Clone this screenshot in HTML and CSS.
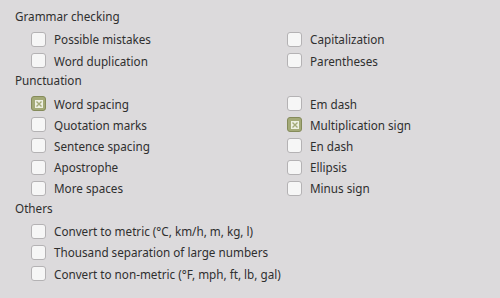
FILE: index.html
```html
<!DOCTYPE html>
<html>
<head>
<meta charset="utf-8">
<link rel="stylesheet" href="styles.css">
</head>
<body>
<div class="panel">
  <div class="heading">Grammar checking</div>
  <div class="grid">
    <label class="opt"><span class="box"></span>Possible mistakes</label>
    <label class="opt"><span class="box"></span>Capitalization</label>
    <label class="opt"><span class="box"></span>Word duplication</label>
    <label class="opt"><span class="box"></span>Parentheses</label>
  </div>
  <div class="heading">Punctuation</div>
  <div class="grid">
    <label class="opt"><span class="box checked"><svg viewBox="0 0 8 8" width="8" height="8"><rect width="8" height="8" fill="#eef0e2"/><path d="M1.5 1.5L6.5 6.5M6.5 1.5L1.5 6.5" stroke="#a4aa78" stroke-width="1.4"/></svg></span>Word spacing</label>
    <label class="opt"><span class="box"></span>Em dash</label>
    <label class="opt"><span class="box"></span>Quotation marks</label>
    <label class="opt"><span class="box checked"><svg viewBox="0 0 8 8" width="8" height="8"><rect width="8" height="8" fill="#eef0e2"/><path d="M1.5 1.5L6.5 6.5M6.5 1.5L1.5 6.5" stroke="#a4aa78" stroke-width="1.4"/></svg></span>Multiplication sign</label>
    <label class="opt"><span class="box"></span>Sentence spacing</label>
    <label class="opt"><span class="box"></span>En dash</label>
    <label class="opt"><span class="box"></span>Apostrophe</label>
    <label class="opt"><span class="box"></span>Ellipsis</label>
    <label class="opt"><span class="box"></span>More spaces</label>
    <label class="opt"><span class="box"></span>Minus sign</label>
  </div>
  <div class="heading">Others</div>
  <div class="list">
    <label class="opt"><span class="box"></span>Convert to metric (°C, km/h, m, kg, l)</label>
    <label class="opt"><span class="box"></span>Thousand separation of large numbers</label>
    <label class="opt"><span class="box"></span>Convert to non-metric (°F, mph, ft, lb, gal)</label>
  </div>
</div>
</body>
</html>
```

FILE: styles.css
```css
html, body {
  margin: 0;
  padding: 0;
  background: #dcdadc;
}
body {
  width: 500px;
  height: 298px;
  overflow: hidden;
  font-family: "Noto Sans", "Open Sans", sans-serif;
  font-size: 11.7px;
  color: #2f2f2f;
}
.panel {
  padding: 7px 0 0 15px;
}
.heading {
  height: 19.8px;
  line-height: 19.8px;
  padding-bottom: 2px;
}
.grid {
  display: grid;
  grid-template-columns: 256px 200px;
  padding-left: 16px;
}
.list {
  padding-left: 16px;
}
.opt {
  display: flex;
  align-items: center;
  height: 21.2px;
  white-space: nowrap;
}
.box {
  box-sizing: border-box;
  width: 15px;
  height: 15px;
  margin-right: 8px;
  border: 1px solid #b4b2b4;
  border-radius: 3px;
  background: #f6f6f6;
  flex: none;
  display: flex;
  align-items: center;
  justify-content: center;
}
.box.checked {
  background: #a4aa78;
  border-color: #858b5a;
}
.box svg {
  display: block;
}
```
